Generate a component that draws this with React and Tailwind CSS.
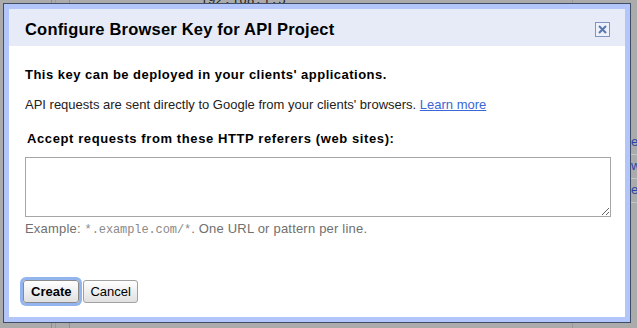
import React from 'react';

const BackgroundPage = () => (
  <div className="absolute inset-0 flex bg-[#ababab]">
    <div className="w-[52px] border-r border-[#8e8e8e]" />
    <div className="w-[4px] border-r border-[#9a9a9a]" />
    <div className="w-[14px] border-r border-[#8e8e8e]" />
    <div className="flex-1 pl-[130px] text-[13px] leading-none text-[#222] -mt-[6px] [font-family:'Liberation_Mono',monospace]">
      192.168.1.5
    </div>
    <div className="w-[65px] border-l border-[#9a9a9a] flex flex-col pt-[131px] items-end">
      {['e', 'w', 'e'].map((c, i) => (
        <div key={i} className="w-[6px] h-[24px] border-b border-[#c4c4c4] text-[13px] text-[#2a46a8] [font-family:'Liberation_Sans',sans-serif] overflow-hidden leading-[22px]">
          {c}
        </div>
      ))}
    </div>
  </div>
);

const CloseIcon = () => (
  <button className="w-[15px] h-[15px] border border-[#7f95bf] bg-[#eef1f9] flex items-center justify-center">
    <svg width="9" height="9" viewBox="0 0 9 9">
      <path d="M1 1 L8 8 M8 1 L1 8" stroke="#5877ae" strokeWidth="2" />
    </svg>
  </button>
);

export default function App() {
  return (
    <div className="relative w-[637px] h-[328px] overflow-hidden [font-family:'Liberation_Sans',Arial,sans-serif]">
      <BackgroundPage />

      {/* Dialog */}
      <div className="absolute left-[3px] top-[3px] w-[628px] h-[320px] border border-[#3f4d66] bg-[#b3c6fb] p-[5px]">
        <div className="h-full bg-white flex flex-col">
          <div className="h-[37px] bg-[#e7ebf7] flex items-center justify-between pl-[16px] pr-[15px] pt-[4px]">
            <h1 className="text-[16.5px] font-bold text-black tracking-[0.2px]">Configure Browser Key for API Project</h1>
            <CloseIcon />
          </div>

          <div className="flex-1 flex flex-col px-[16px]">
            <p className="mt-[21px] text-[13px] font-bold text-black leading-[16px] tracking-[0.48px]">
              This key can be deployed in your clients' applications.
            </p>
            <p className="mt-[14px] text-[13px] text-[#222] leading-[16px]">
              API requests are sent directly to Google from your clients' browsers.{' '}
              <a href="#" className="text-[#3a66d8] underline">Learn more</a>
            </p>
            <p className="mt-[18px] ml-[2px] text-[13px] font-bold text-black leading-[16px] tracking-[0.6px]">
              Accept requests from these HTTP referers (web sites):
            </p>
            <textarea className="mt-[10px] w-[586px] h-[60px] border border-[#a6a6a6] bg-white resize-y outline-none" />
            <p className="mt-[4px] text-[13px] text-[#707070] leading-[16px] tracking-[0.2px]">
              Example: <span className="[font-family:'Liberation_Mono',monospace] text-[12px] tracking-[-0.1px] text-[#8a8a8a]">*.example.com/*</span>. One URL or pattern per line.
            </p>

            <div className="mt-auto mb-[14px] flex items-center">
              <button className="h-[23px] px-[7px] rounded-[3px] border border-[#8a8a8a] bg-gradient-to-b from-[#ffffff] to-[#e0e0e0] text-[13px] font-bold text-black ring-[3px] ring-[#93b5ef] ml-[-2px]">
                Create
              </button>
              <button className="h-[23px] px-[6px] ml-[4px] rounded-[3px] border border-[#a0a0a0] bg-gradient-to-b from-[#ffffff] to-[#e0e0e0] text-[13px] text-black">
                Cancel
              </button>
            </div>
          </div>
        </div>
      </div>
    </div>
  );
}
